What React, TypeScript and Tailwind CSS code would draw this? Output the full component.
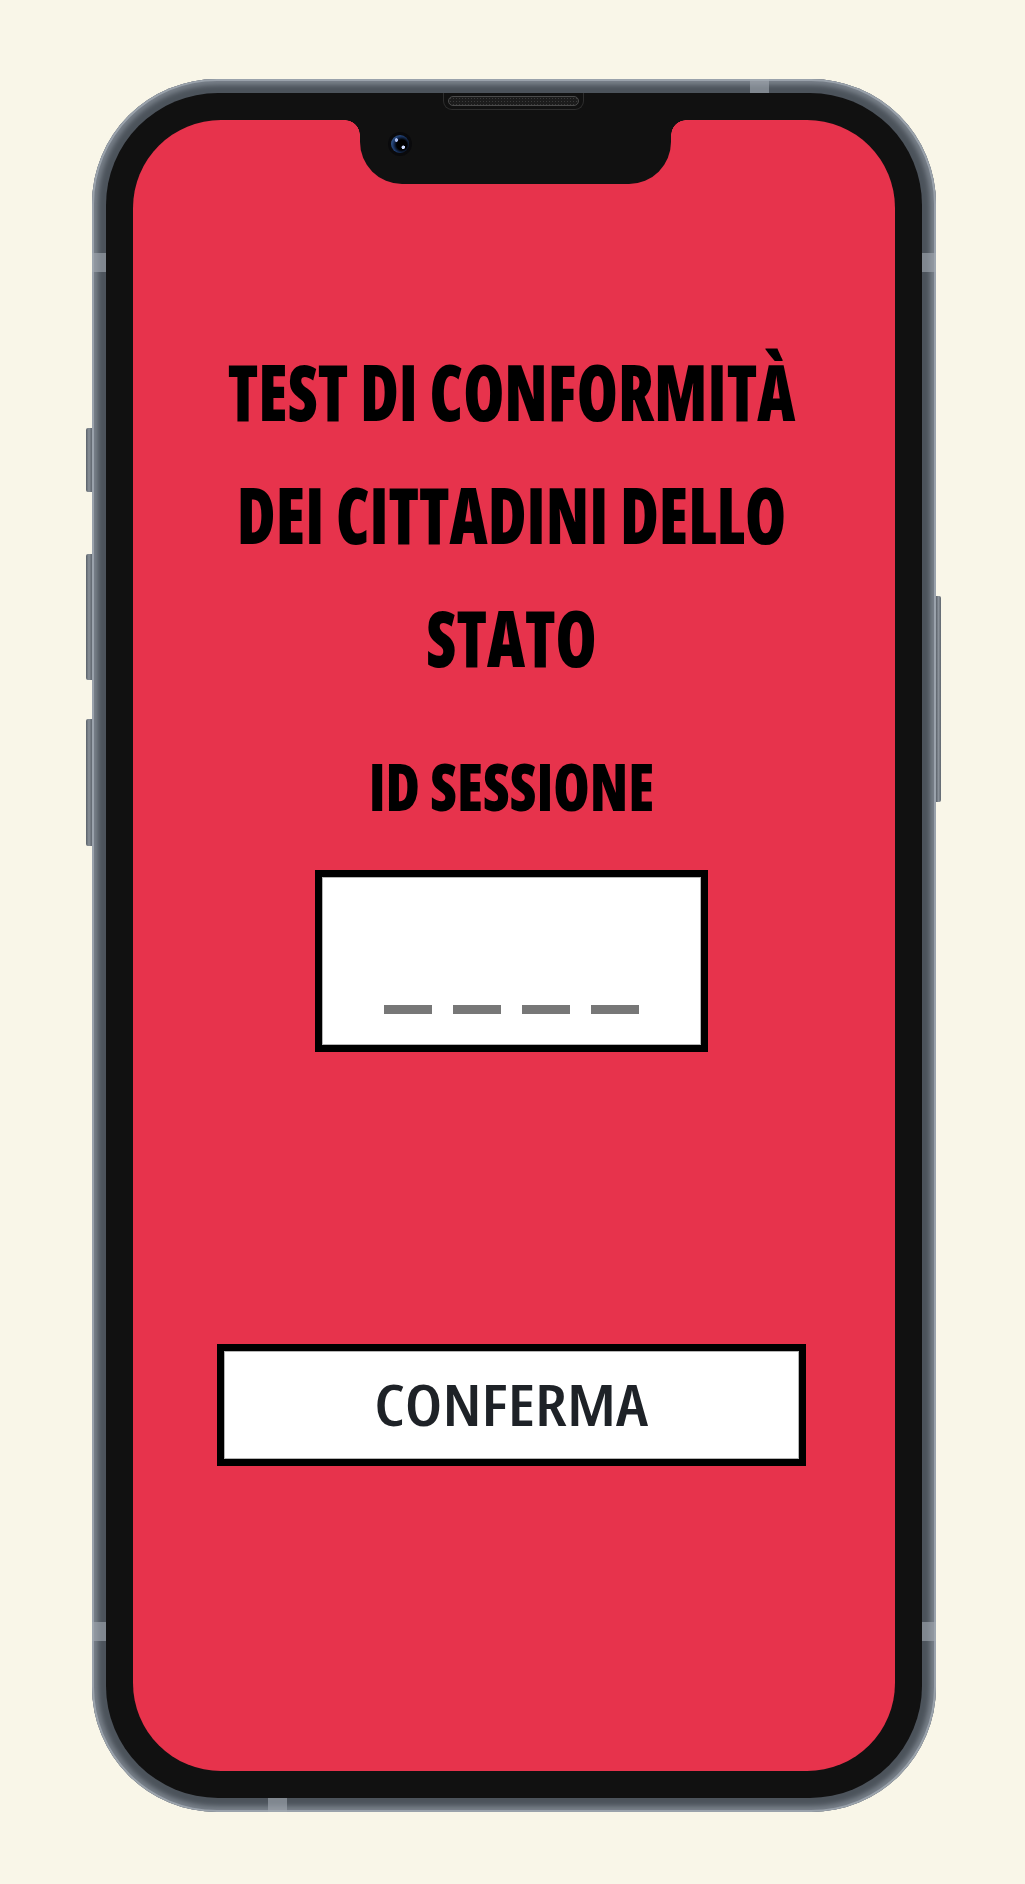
// Phone mockup: session ID entry screen
const condensed = "font-['Open_Sans',sans-serif] font-extrabold [font-stretch:75%] text-black text-center";
const band = 'absolute bg-[#a3aab2]/60';
const sideBtn = 'bg-gradient-to-r from-[#5a6169] via-[#8a9199] to-[#5f666e]';

export default function App() {
  return (
    <div className="w-[1025px] h-[1884px] bg-[#f9f6e8] pt-[79px] pl-[86px] flex items-start">
      {/* left hardware buttons */}
      <div className="w-[6px] flex flex-col pt-[349px]">
        <div className={`h-[64px] rounded-l-[2px] ${sideBtn}`} />
        <div className={`h-[126px] mt-[62px] rounded-l-[2px] ${sideBtn}`} />
        <div className={`h-[127px] mt-[39px] rounded-l-[2px] ${sideBtn}`} />
      </div>

      {/* frame */}
      <div className="relative w-[844px] h-[1733px] rounded-[125px] bg-[#4c535b] p-[14px] shadow-[inset_0_0_0_2px_#9aa2ab,inset_0_0_5px_6px_#79818a]">
        {/* antenna bands, hidden behind the bezel except on the rim */}
        <div className={`${band} left-0 right-0 top-[174px] h-[19px]`} />
        <div className={`${band} left-0 right-0 top-[1543px] h-[19px]`} />
        <div className={`${band} top-0 left-[658px] w-[19px] h-[14px]`} />
        <div className={`${band} bottom-0 left-[176px] w-[19px] h-[14px]`} />

        {/* bezel */}
        <div className="relative w-full h-full rounded-[112px] bg-[#111111] p-[27px]">
          {/* speaker */}
          <div className="absolute top-0 left-[337px] w-[141px] h-[17px] rounded-b-[9px] border border-t-0 border-[#2e2e2e] flex justify-center pt-[3px]">
            <div className="w-[131px] h-[10px] rounded-full border border-[#4a4a4a] bg-[#1c1c1c] bg-[radial-gradient(#3a3a3a_35%,transparent_40%)] bg-[length:3px_3px]" />
          </div>

          {/* screen */}
          <div className="relative w-full h-full rounded-[88px] bg-[#e7334c] overflow-hidden flex flex-col items-center pr-[5px]">
            {/* notch */}
            <div className="absolute top-0 left-[227px] w-[311px] h-[64px] bg-[#111111] rounded-b-[42px] flex items-start pl-[28px] pt-[12px]">
              <div className="absolute -left-[15px] top-0 w-[15px] h-[15px] bg-[radial-gradient(circle_at_0_100%,transparent_14.5px,#111111_15px)]" />
              <div className="absolute -right-[15px] top-0 w-[15px] h-[15px] bg-[radial-gradient(circle_at_100%_100%,transparent_14.5px,#111111_15px)]" />
              <div className="w-[24px] h-[24px] rounded-full bg-[#0a0a0c] flex items-center justify-center">
                <div className="w-[18px] h-[18px] rounded-full bg-[radial-gradient(circle_at_30%_28%,#a9bdf0_0,#a9bdf0_1.5px,transparent_2px),radial-gradient(circle_at_68%_68%,#cfdcff_0,#cfdcff_1.5px,transparent_2px),radial-gradient(circle_at_60%_55%,#000_35%,#1d3b6e_60%,#3b5e8a_80%,#16263f_100%)]" />
              </div>
            </div>

            <h1 className={`${condensed} w-full pt-[210px] text-[78px] leading-[123px] scale-x-[0.85]`}>
              TEST DI CONFORMITÀ<br />
              DEI CITTADINI DELLO<br />
              STATO
            </h1>
            <h2 className={`${condensed} w-full text-[66px] leading-[80px] mt-[46px] scale-x-[0.89]`}>
              ID SESSIONE
            </h2>

            <div className="w-[393px] h-[182px] mt-[45px] border-[7px] border-black bg-white shadow-[inset_0_0_0_1px_#b5b5b5] flex items-end justify-center gap-[21px] pb-[31px]">
              <div className="w-[48px] h-[9px] bg-[#777777]" />
              <div className="w-[48px] h-[9px] bg-[#777777]" />
              <div className="w-[48px] h-[9px] bg-[#777777]" />
              <div className="w-[48px] h-[9px] bg-[#777777]" />
            </div>

            <button className="w-[589px] h-[122px] mt-[292px] border-[7px] border-black bg-white shadow-[inset_0_0_0_1px_#b5b5b5] flex items-center justify-center">
              <span className="inline-block font-['Open_Sans',sans-serif] font-semibold [font-stretch:82%] text-[58px] leading-none text-[#1e2227] -mt-[2px] scale-x-[1.14]">
                CONFERMA
              </span>
            </button>
          </div>
        </div>
      </div>

      {/* right hardware button */}
      <div className="w-[5px] pt-[517px]">
        <div className={`h-[206px] rounded-r-[2px] ${sideBtn}`} />
      </div>
    </div>
  );
}
